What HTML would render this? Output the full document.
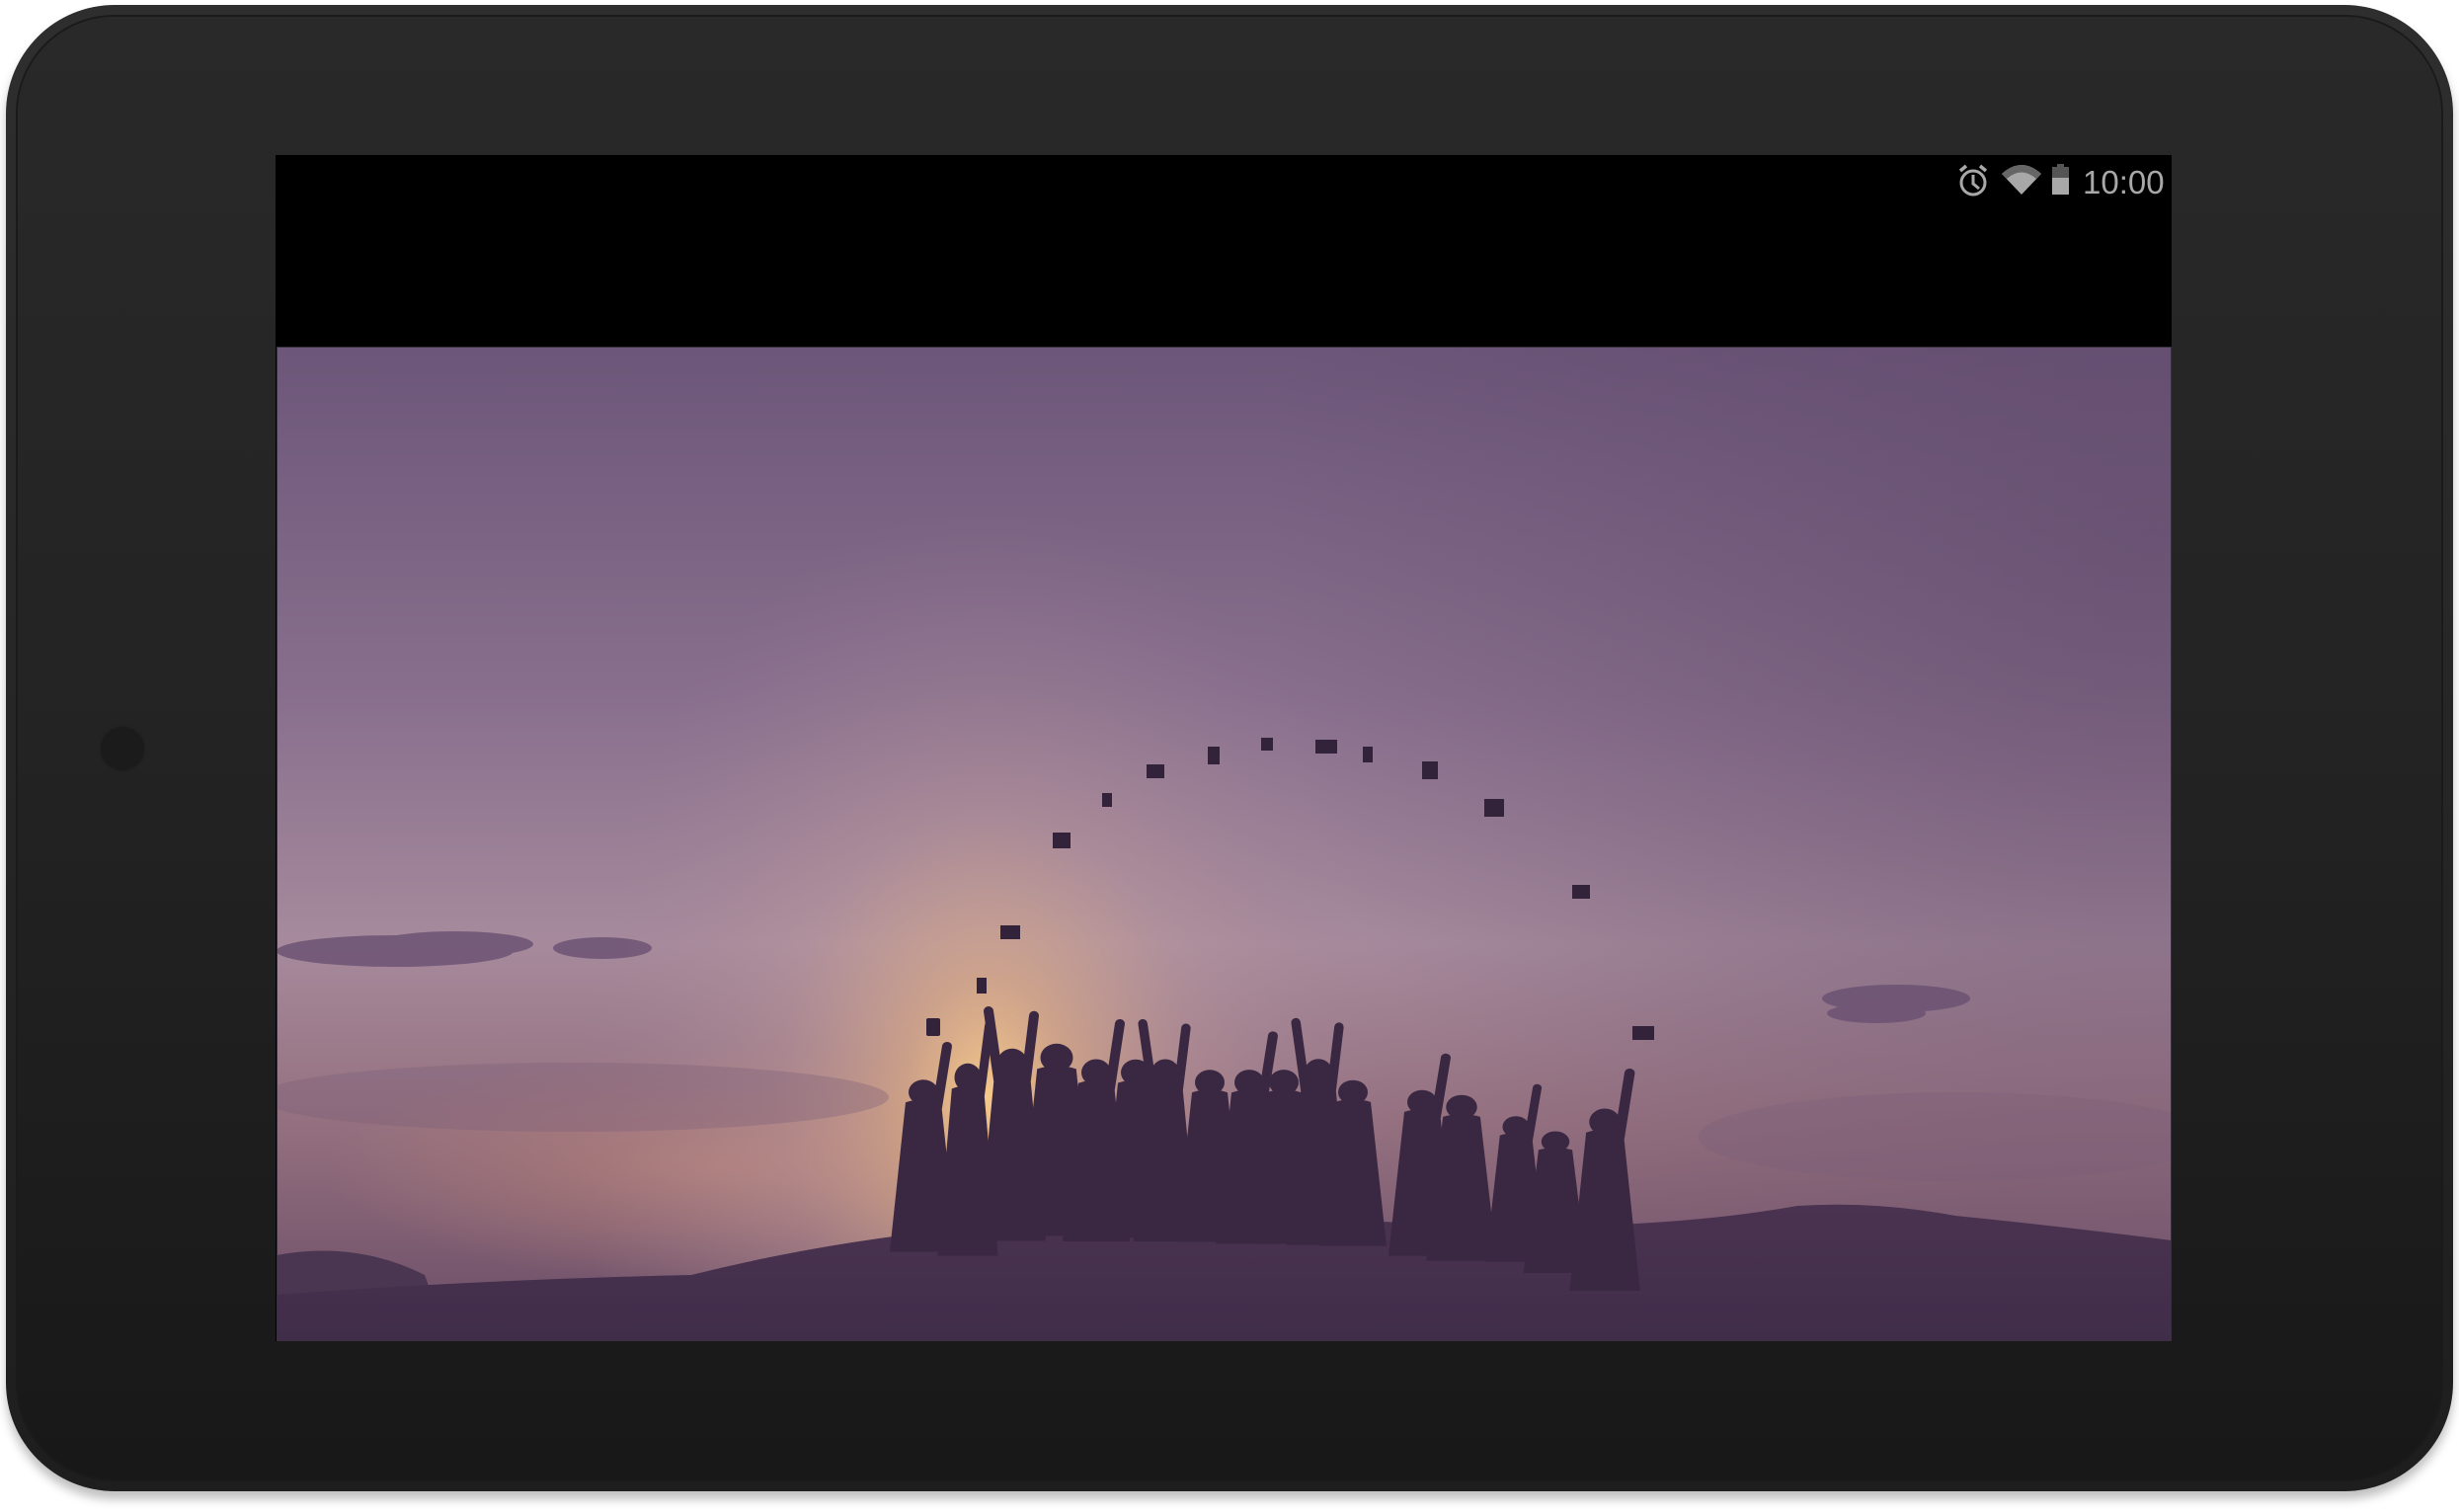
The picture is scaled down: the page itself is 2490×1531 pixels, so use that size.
<!DOCTYPE html>
<html><head><meta charset="utf-8"><style>
html,body{margin:0;padding:0;background:#fff;width:2490px;height:1531px;overflow:hidden;font-family:"Liberation Sans",sans-serif}
.body{position:absolute;left:6px;top:5px;width:2478px;height:1505px;border-radius:110px;background:linear-gradient(#2e2e2e,#1e1e1e);box-shadow:0 8px 10px rgba(0,0,0,.25)}
.inner{position:absolute;left:12px;top:12px;right:12px;bottom:12px;border-radius:98px;background:linear-gradient(#292929 0%,#232323 50%,#181818 100%);box-shadow:0 0 0 2px #1a1a1a}
.cam{position:absolute;left:103px;top:737px;width:42px;height:42px;border-radius:50%;background:#1b1b1b;box-shadow:0 0 3px #111}
.screen{position:absolute;left:279px;top:157px;width:1920px;height:1201px;background:#000}
.time{position:absolute;left:2109px;top:166px;font-size:33px;color:#a8a8a8}
</style></head><body>
<div class="body"><div class="inner"></div></div>
<div class="cam"></div>
<div class="screen"></div>
<svg style="position:absolute;left:0;top:0" width="2490" height="1531">
 <g fill="none" stroke="#a8a8a8" stroke-width="3">
  <circle cx="1998" cy="185" r="12"/>
  <path d="M1998 177v9l6 5"/>
  <path d="M1985 173l6-5M2011 173l-6-5" stroke-width="3.5"/>
 </g>
 <path d="M2027 176 Q2047 158 2067 176 L2047 197 Z" fill="#a8a8a8"/>
 <path d="M2027 176 Q2047 158 2067 176 L2062 181 Q2047 168 2032 181 Z" fill="#666"/>
 <rect x="2083" y="166" width="7" height="4" fill="#555"/>
 <rect x="2078" y="169" width="17" height="28" fill="#555"/>
 <rect x="2078" y="180" width="17" height="17" fill="#a8a8a8"/>
</svg>
<div class="time">10:00</div>
<svg style="position:absolute;left:280px;top:351px" width="1919" height="1007" viewBox="0 0 1919 1007">
 <defs>
  <linearGradient id="sky" x1="0" y1="0" x2="0" y2="1">
   <stop offset="0" stop-color="#6c5679"/>
   <stop offset="0.35" stop-color="#886f8d"/>
   <stop offset="0.6" stop-color="#a68a9c"/>
   <stop offset="0.78" stop-color="#94707f"/>
   <stop offset="1" stop-color="#6a4c66"/>
  </linearGradient>
  <radialGradient id="glow" cx="720" cy="760" r="600" gradientUnits="userSpaceOnUse" gradientTransform="translate(720 760) scale(0.7 1) translate(-720 -760)">
   <stop offset="0" stop-color="#f6c98a" stop-opacity="1"/>
   <stop offset="0.2" stop-color="#e0b088" stop-opacity="0.7"/>
   <stop offset="0.5" stop-color="#c39d9c" stop-opacity="0.35"/>
   <stop offset="1" stop-color="#a08398" stop-opacity="0"/>
  </radialGradient>
  <radialGradient id="warm" cx="450" cy="830" r="400" gradientUnits="userSpaceOnUse" gradientTransform="translate(450 830) scale(1 0.3) translate(-450 -830)">
   <stop offset="0" stop-color="#c58a78" stop-opacity="0.6"/>
   <stop offset="1" stop-color="#c58a78" stop-opacity="0"/>
  </radialGradient>
  <radialGradient id="side" cx="1900" cy="200" r="900" gradientUnits="userSpaceOnUse">
   <stop offset="0" stop-color="#5e4768" stop-opacity="0.6"/>
   <stop offset="1" stop-color="#5e4768" stop-opacity="0"/>
  </radialGradient>
  <linearGradient id="ground" x1="0" y1="0" x2="0" y2="1">
   <stop offset="0" stop-color="#4a3350"/>
   <stop offset="1" stop-color="#402d4a"/>
  </linearGradient>
  <g id="r">
   <circle cx="0" cy="0" r="15"/>
   <path d="M-18 12 Q0 5 18 12 L34 190 L-34 190 Z"/>
  </g>
  <g id="p">
   <use href="#r"/>
   <path d="M-14 18 L-24 -55 M14 18 L22 -50" stroke="#3a2842" stroke-width="10" stroke-linecap="round"/>
  </g>
  <g id="q">
   <use href="#r"/>
   <path d="M14 18 L24 -55" stroke="#3a2842" stroke-width="10" stroke-linecap="round"/>
  </g>
 </defs>
 <rect width="1919" height="1007" fill="url(#sky)"/>
 <rect width="1919" height="1007" fill="url(#side)"/>
 <rect width="1919" height="1007" fill="url(#warm)"/>
 <rect width="1919" height="1007" fill="url(#glow)"/>
 <g fill="#6a5072" opacity="0.8">
  <ellipse cx="120" cy="612" rx="120" ry="16"/>
  <ellipse cx="180" cy="605" rx="80" ry="13"/>
  <ellipse cx="330" cy="609" rx="50" ry="11"/>
  <ellipse cx="1640" cy="660" rx="75" ry="14"/>
  <ellipse cx="1620" cy="675" rx="50" ry="10"/>
 </g>
 <g fill="#7c5f78" opacity="0.35">
  <ellipse cx="300" cy="760" rx="320" ry="35"/>
  <ellipse cx="1700" cy="800" rx="260" ry="45"/>
 </g>
 <g fill="#32223a">
  <rect x="658" y="680" width="14" height="18" rx="2"/>
  <rect x="709" y="639" width="10" height="16"/>
  <rect x="733" y="586" width="20" height="14"/>
  <rect x="786" y="492" width="18" height="16"/>
  <rect x="836" y="452" width="10" height="14"/>
  <rect x="881" y="423" width="18" height="14"/>
  <rect x="943" y="405" width="12" height="18"/>
  <rect x="997" y="396" width="12" height="13"/>
  <rect x="1052" y="398" width="22" height="14"/>
  <rect x="1100" y="405" width="10" height="16"/>
  <rect x="1160" y="420" width="16" height="18"/>
  <rect x="1223" y="458" width="20" height="18"/>
  <rect x="1312" y="545" width="18" height="14"/>
  <rect x="1373" y="688" width="22" height="14"/>
 </g>
 <path d="M0 920 Q80 905 150 940 L175 1007 L0 1007 Z" fill="#4a3650"/>
 <path d="M0 1007 L0 960 Q200 945 420 940 Q600 895 800 885 Q1000 878 1200 890 Q1400 895 1540 870 Q1620 865 1700 880 Q1800 890 1919 905 L1919 1007 Z" fill="url(#ground)"/>
 <g fill="#3a2842">
  <use href="#q" transform="translate(655 755) scale(1 0.85)"/>
  <use href="#q" transform="translate(700 740) scale(0.9 0.95)"/>
  <use href="#p" transform="translate(745 725) scale(1 0.95)"/>
  <use href="#r" transform="translate(790 720) scale(1.1 0.95)"/>
  <use href="#q" transform="translate(830 735) scale(1 0.9)"/>
  <use href="#r" transform="translate(870 735) scale(1 0.88)"/>
  <use href="#p" transform="translate(900 735) scale(0.95 0.9)"/>
  <use href="#r" transform="translate(945 745) scale(1 0.85)"/>
  <use href="#q" transform="translate(985 745) scale(1 0.86)"/>
  <use href="#r" transform="translate(1020 745) scale(1 0.86)"/>
  <use href="#p" transform="translate(1055 735) scale(0.95 0.92)"/>
  <use href="#r" transform="translate(1090 755) scale(1 0.82)"/>
  <use href="#q" transform="translate(1160 765) scale(1 0.82)"/>
  <use href="#r" transform="translate(1200 770) scale(1.05 0.82)"/>
  <use href="#q" transform="translate(1255 790) scale(0.9 0.72)"/>
  <use href="#r" transform="translate(1295 805) scale(0.95 0.7)"/>
  <use href="#q" transform="translate(1345 785) scale(1.05 0.9)"/>
 </g>
 <rect x="0" y="0" width="1919" height="1007" fill="none" stroke="#3a3040" stroke-width="2"/>
</svg>
</body></html>
